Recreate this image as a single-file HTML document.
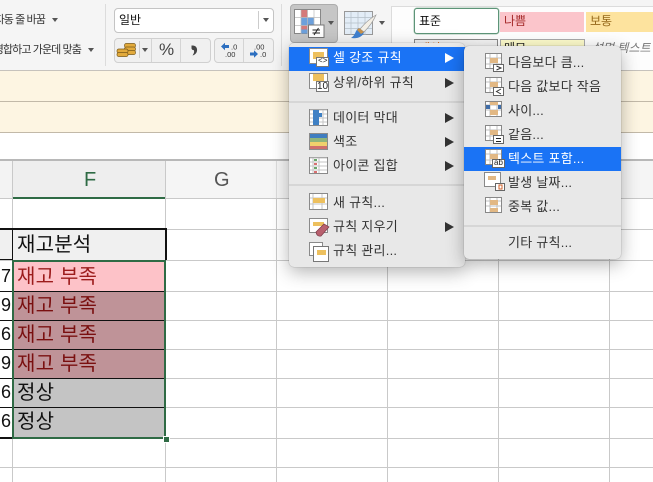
<!DOCTYPE html>
<html lang="ko"><head><meta charset="utf-8"><style>
html,body{margin:0;padding:0}
#p{position:relative;width:653px;height:482px;overflow:hidden;background:#fff;font-family:"Liberation Sans","Noto Sans CJK KR",sans-serif;color:#222}
#p div,#p svg{position:absolute}
.t{white-space:nowrap;line-height:16px}
.m{font-size:13px;color:#333;letter-spacing:.25px;height:16px}
.c{font-size:20px;line-height:26px;white-space:nowrap;left:17px;letter-spacing:.2px}
.a{width:0;height:0;border-left:9px solid #333;border-top:5px solid transparent;border-bottom:5px solid transparent;left:445px}
.d{width:0;height:0;border-top:4px solid #555;border-left:3px solid transparent;border-right:3px solid transparent}
.n{left:0;width:11px;text-align:right;font-size:18px;line-height:24px;color:#111}
</style></head><body><div id="p">

<div style="left:0;top:0;width:653px;height:70px;background:#f5f5f5"></div>
<div style="left:0;top:70px;width:653px;height:1px;background:#c6c2bc"></div>
<div style="left:0;top:71px;width:653px;height:30px;background:#fdf5e2"></div>
<div style="left:0;top:101px;width:653px;height:1px;background:#c2b9a8"></div>
<div style="left:0;top:102px;width:653px;height:30px;background:#fdf5e2"></div>
<div style="left:0;top:132px;width:653px;height:1px;background:#c2b9a8"></div>
<div style="left:0;top:159px;width:653px;height:2px;background:#b8b8b8"></div>

<div style="left:0;top:161px;width:12px;height:37px;background:#f3f3f3"></div>
<div style="left:13px;top:161px;width:152px;height:36px;background:#eeeeee"></div>
<div style="left:166px;top:161px;width:487px;height:37px;background:#f5f5f5"></div>
<div style="left:0;top:198px;width:653px;height:1px;background:#c9c9c9"></div>
<div style="left:13px;top:197px;width:153px;height:2px;background:#2f6b45"></div>
<div class="t" style="left:84px;top:170px;font-size:20px;line-height:20px;color:#2f6b45">F</div>
<div class="t" style="left:214px;top:170px;font-size:20px;line-height:20px;color:#555">G</div>

<svg style="left:0;top:0" width="653" height="482">
<g stroke="#c9c9c9" stroke-width="1" shape-rendering="crispEdges">
<path d="M12.5 161V482M165.5 161V482M276.5 199V482M387.5 199V482M498.5 199V482M609.5 199V482"/>
<path d="M0 229.5H653M0 260.5H653M0 291.5H653M0 320.5H653M0 349.5H653M0 378.5H653M0 407.5H653M0 438.5H653M0 467.5H653"/>
</g>
<path d="M276.5 161V198M387.5 161V198M498.5 161V198M609.5 161V198" stroke="#dcdcdc" shape-rendering="crispEdges"/>
</svg>

<div style="left:0;top:230px;width:12px;height:29px;background:#f0f0f0"></div>
<div style="left:13px;top:230px;width:152px;height:30px;background:#f0f0f0"></div>
<div style="left:0;top:228px;width:166px;height:2px;background:#111"></div>
<div style="left:12px;top:228px;width:1px;height:211px;background:#111"></div>
<div style="left:165px;top:228px;width:2px;height:32px;background:#111"></div>
<div style="left:0;top:259px;width:13px;height:1px;background:#111"></div>
<div style="left:0;top:291px;width:13px;height:1px;background:#111"></div>
<div style="left:0;top:320px;width:13px;height:1px;background:#111"></div>
<div style="left:0;top:349px;width:13px;height:1px;background:#111"></div>
<div style="left:0;top:378px;width:13px;height:1px;background:#111"></div>
<div style="left:0;top:407px;width:13px;height:1px;background:#111"></div>
<div style="left:0;top:437px;width:13px;height:2px;background:#111"></div>

<div style="left:14px;top:262px;width:150px;height:29px;background:#fdc2c8"></div>
<div style="left:14px;top:292px;width:150px;height:28px;background:#bf9398"></div>
<div style="left:14px;top:321px;width:150px;height:28px;background:#bf9398"></div>
<div style="left:14px;top:350px;width:150px;height:28px;background:#bf9398"></div>
<div style="left:14px;top:379px;width:150px;height:28px;background:#c4c4c4"></div>
<div style="left:14px;top:408px;width:150px;height:29px;background:#c4c4c4"></div>
<div style="left:14px;top:291px;width:150px;height:1px;background:#111"></div>
<div style="left:14px;top:320px;width:150px;height:1px;background:#111"></div>
<div style="left:14px;top:349px;width:150px;height:1px;background:#111"></div>
<div style="left:14px;top:378px;width:150px;height:1px;background:#111"></div>
<div style="left:14px;top:407px;width:150px;height:1px;background:#111"></div>
<div style="left:12px;top:260px;width:150px;height:175px;border:2px solid #2f6b45"></div>
<div style="left:163px;top:436px;width:5px;height:5px;background:#2f6b45;border:1px solid #fff"></div>

<div class="c" style="top:232px;color:#111">재고분석</div>
<div class="c" style="top:264px;color:#9c1c1c">재고 부족</div>
<div class="c" style="top:293px;color:#7a1010">재고 부족</div>
<div class="c" style="top:322px;color:#7a1010">재고 부족</div>
<div class="c" style="top:351px;color:#7a1010">재고 부족</div>
<div class="c" style="top:380px;color:#111">정상</div>
<div class="c" style="top:409px;color:#111">정상</div>
<div class="n" style="top:264px">7</div>
<div class="n" style="top:293px">9</div>
<div class="n" style="top:322px">6</div>
<div class="n" style="top:351px">9</div>
<div class="n" style="top:380px">6</div>
<div class="n" style="top:409px">6</div>

<div class="t" style="right:608px;top:12px;font-size:11px;letter-spacing:-.9px;color:#333">자동 줄 바꿈</div>
<div class="d" style="left:52px;top:18px"></div>
<div class="t" style="right:572px;top:42px;font-size:11px;letter-spacing:-.9px;color:#333">병합하고 가운데 맞춤</div>
<div class="d" style="left:88px;top:48px"></div>
<div style="left:105px;top:4px;width:1px;height:62px;background:#dcdcdc"></div>
<div style="left:281px;top:4px;width:1px;height:62px;background:#dcdcdc"></div>

<div style="left:114px;top:8px;width:158px;height:23px;background:#fff;border:1px solid #c4c4c4;border-radius:4px"></div>
<div style="left:258px;top:11px;width:1px;height:18px;background:#ccc"></div>
<div class="d" style="left:263px;top:18px"></div>
<div class="t" style="left:119px;top:12px;font-size:12px;color:#111">일반</div>

<div style="left:114px;top:38px;width:95px;height:23px;background:#f0f0f0;border:1px solid #d0d0d0;border-radius:4px"></div>
<div style="left:151px;top:39px;width:1px;height:23px;background:#d4d4d4"></div>
<div style="left:180px;top:39px;width:1px;height:23px;background:#d4d4d4"></div>
<div style="left:139px;top:41px;width:1px;height:17px;background:#ccc"></div>
<div class="d" style="left:142px;top:48px"></div>
<div style="left:214px;top:38px;width:58px;height:23px;background:#f0f0f0;border:1px solid #d0d0d0;border-radius:4px"></div>
<div style="left:243px;top:39px;width:1px;height:23px;background:#d4d4d4"></div>
<svg style="left:116px;top:42px" width="22" height="18">
<g stroke="#7a5a1a" stroke-width=".7" fill="#e2aa3c"><rect x="8.500" y="1.500" width="11" height="4" rx="1.800"/><rect x="8.500" y="5" width="11" height="4" rx="1.800"/><rect x="8.500" y="8.500" width="11" height="4" rx="1.800"/><rect x="1" y="7" width="11" height="4" rx="1.800"/><rect x="1" y="10.500" width="11" height="4" rx="1.800"/></g></svg>
<div class="t" style="left:159px;top:42px;font-size:17px;color:#444">%</div>
<svg style="left:190px;top:44px" width="10" height="13"><path d="M1.500 1.500C6 1 7.500 4 7 7C6.500 9.500 4.500 11 2.500 11.500C4 9.500 4.500 7.500 3.800 6C3 6.300 2 5.800 1.500 4.500Z" fill="#444"/></svg>
<svg style="left:220px;top:42px" width="20" height="16"><path d="M1 4.500L5 .8V3H9V6H5V8.200Z" fill="#2c6fc0"/><text x="11" y="7.500" font-size="7.500" fill="#333" font-family="Liberation Sans">.0</text><text x="5" y="15" font-size="7.500" fill="#333" font-family="Liberation Sans">.00</text></svg>
<svg style="left:249px;top:42px" width="20" height="16"><text x="5" y="7.500" font-size="7.500" fill="#333" font-family="Liberation Sans">.00</text><path d="M9 12L5 8.300V10.500H1V13.500H5V15.700Z" fill="#2c6fc0"/><text x="11" y="15" font-size="7.500" fill="#333" font-family="Liberation Sans">.0</text></svg>

<div style="left:290px;top:4px;width:46px;height:37px;background:#c6c6c6;border:1px solid #adadad;border-radius:4px"></div>
<svg style="left:294px;top:9px" width="32" height="30">
<rect x=".5" y=".5" width="26" height="24" fill="#fff" stroke="#888"/>
<rect x="7" y="1" width="6.500" height="7.500" fill="#d47a7a"/><rect x="7" y="8.500" width="13" height="8" fill="#6ca0dc"/><rect x="7" y="16.500" width="6.500" height="4" fill="#d47a7a"/><rect x="7" y="20.500" width="13" height="4" fill="#6ca0dc"/>
<path d="M7 1V25M13.500 1V25M20 1V25M1 8.500H26M1 16.500H26" stroke="#bbb" stroke-width=".7"/>
<rect x="14.500" y="16" width="15.500" height="12.500" fill="#fff" stroke="#777"/>
<path d="M18.500 21H26M18.500 24H26M24.500 19L20 26" stroke="#222" fill="none"/>
</svg>
<div class="d" style="left:328px;top:21px"></div>
<svg style="left:344px;top:11px" width="36" height="29">
<rect x=".5" y=".5" width="28" height="23" fill="#e3edf7" stroke="#999"/>
<path d="M7 1V24M14 1V24M21 1V24M1 6.500H28M1 12H28M1 17.500H28" stroke="#b4bec8" stroke-width=".7"/>
<path d="M32 4C27 7 21 12 16 18L20 21C24 17 29 11 32 4Z" fill="#f3efe6" stroke="#999" stroke-width=".7"/>
<path d="M15 17C11 19 12 24 7 27C13 28 19 26 20 21Z" fill="#3f80d0"/><path d="M15 17L20 21L17 23L13 19Z" fill="#c9924a"/>
</svg>
<div class="d" style="left:379px;top:21px"></div>

<div style="left:391px;top:6px;width:262px;height:64px;background:#fdfdfd;border-left:1px solid #dcdcdc;border-top:1px solid #dcdcdc;box-sizing:border-box"></div>
<div class="t" style="left:414px;top:8px;width:83px;height:24px;background:#fff;border:1px solid #5d9478;border-radius:3px;box-shadow:0 0 0 .5px #a8c8b4"></div>
<div class="t" style="left:419px;top:13px;font-size:12px;color:#111">표준</div>
<div style="left:500px;top:12px;width:84px;height:20px;background:#fbc5cb"></div>
<div class="t" style="left:504px;top:13px;font-size:12px;color:#a52a2a">나쁨</div>
<div style="left:586px;top:12px;width:67px;height:20px;background:#fde39e"></div>
<div class="t" style="left:590px;top:13px;font-size:12px;color:#96691a">보통</div>
<div style="left:414px;top:39px;width:82px;height:20px;background:#f2f2f2;border:1px solid #888"></div>
<div class="t" style="left:419px;top:40px;font-size:12px;color:#e07020">계산</div>
<div style="left:500px;top:39px;width:83px;height:20px;background:#fdfbcb;border:1px solid #aaa"></div>
<div class="t" style="left:504px;top:40px;font-size:12px;color:#222">메모</div>
<div class="t" style="left:592px;top:40px;font-size:12px;font-style:italic;color:#777">설명 텍스트</div>

<div style="left:289px;top:43px;width:176px;height:224px;background:#e8e8e8;border-radius:5px;box-shadow:0 5px 18px rgba(0,0,0,.3),0 0 1px rgba(0,0,0,.4)"></div>
<div style="left:289px;top:47px;width:176px;height:24px;background:#1a73f5"></div>
<div style="left:289px;top:101px;width:176px;height:2px;background:#d6d6d6"></div>
<div style="left:289px;top:184px;width:176px;height:2px;background:#d6d6d6"></div>
<div class="t m" style="left:333px;top:50px;color:#fff">셀 강조 규칙</div>
<div class="t m" style="left:333px;top:75px">상위/하위 규칙</div>
<div class="t m" style="left:333px;top:110px">데이터 막대</div>
<div class="t m" style="left:333px;top:134px">색조</div>
<div class="t m" style="left:333px;top:158px">아이콘 집합</div>
<div class="t m" style="left:333px;top:195px">새 규칙...</div>
<div class="t m" style="left:333px;top:219px">규칙 지우기</div>
<div class="t m" style="left:333px;top:243px">규칙 관리...</div>
<div class="a" style="top:53px;border-left-color:#fff"></div>
<div class="a" style="top:78px"></div>
<div class="a" style="top:113px"></div>
<div class="a" style="top:137px"></div>
<div class="a" style="top:161px"></div>
<div class="a" style="top:222px"></div>

<svg style="left:0;top:0" width="653" height="482" shape-rendering="crispEdges">
<g fill="#fff" stroke="#8a8a8a">
<rect x="309.500" y="48.500" width="18" height="15"/>
<rect x="309.500" y="73.500" width="18" height="15"/>
<rect x="309.500" y="109.500" width="18" height="16"/>
<rect x="309.500" y="133.500" width="18" height="16"/>
<rect x="309.500" y="157.500" width="18" height="16"/>
<rect x="309.500" y="193.500" width="18" height="16"/>
<rect x="309.500" y="218.500" width="18" height="14"/>
<rect x="309.500" y="242.500" width="13" height="13"/>
</g>
<path d="M310 110H327M310 114H327M310 118H327M310 122H327M323 110V125M310 158H327M310 162H327M310 166H327M310 170H327M313 158V173M319 158V173M313 194V209M322 194V209M310 198H327M310 204H327" stroke="#c4c4c4" fill="none"/>
<rect x="313" y="110" width="6" height="15" fill="#3f80c4"/><rect x="319" y="113" width="3" height="4" fill="#3f80c4"/>
<rect x="310" y="134" width="17" height="4" fill="#3f7dc0"/><rect x="310" y="138" width="17" height="4" fill="#8fb47a"/><rect x="310" y="142" width="17" height="4" fill="#f0d06c"/><rect x="310" y="146" width="17" height="3" fill="#cf6f6c"/>
<path d="M314 159h3v2h-3zM314 167h3v2h-3z" fill="#6aa66a"/><path d="M314 163h3v2h-3zM314 171h3v2h-3z" fill="#d87070"/>
<g fill="#edc05e"><rect x="313" y="52" width="11" height="7"/><rect x="313" y="74" width="11" height="7"/><rect x="313" y="198" width="12" height="5"/><rect x="313" y="222" width="11" height="4"/></g>
<g fill="#fff" stroke="#777"><rect x="316.500" y="57.500" width="12" height="9"/><rect x="316.500" y="81.500" width="12" height="10"/><rect x="313.500" y="246.500" width="15" height="15"/></g>
<rect x="317" y="250" width="9" height="5" fill="#edc05e"/>
</svg>
<div style="left:464px;top:46px;width:157px;height:213px;background:#e8e8e8;border-radius:5px;box-shadow:0 5px 18px rgba(0,0,0,.3),0 0 1px rgba(0,0,0,.4)"></div>
<div style="left:464px;top:147px;width:157px;height:24px;background:#1a73f5"></div>
<div style="left:464px;top:225px;width:157px;height:2px;background:#d6d6d6"></div>
<div class="t m" style="left:508px;top:55px">다음보다 큼...</div>
<div class="t m" style="left:508px;top:79px">다음 값보다 작음</div>
<div class="t m" style="left:508px;top:103px">사이...</div>
<div class="t m" style="left:508px;top:127px">같음...</div>
<div class="t m" style="left:508px;top:151px;color:#fff">텍스트 포함...</div>
<div class="t m" style="left:508px;top:175px">발생 날짜...</div>
<div class="t m" style="left:508px;top:199px">중복 값...</div>
<div class="t m" style="left:508px;top:235px">기타 규칙...</div>

<svg style="left:0;top:0" width="653" height="482" shape-rendering="crispEdges">
<g fill="#fff" stroke="#888">
<rect x="485.500" y="53.500" width="16" height="15"/>
<rect x="485.500" y="77.500" width="16" height="15"/>
<rect x="485.500" y="101.500" width="16" height="15"/>
<rect x="485.500" y="125.500" width="16" height="15"/>
<rect x="485.500" y="149.500" width="16" height="15"/>
<rect x="484.500" y="172.500" width="16" height="14"/>
<rect x="485.500" y="197.500" width="16" height="15"/>
</g>
<path d="M490 54V68M497 54V68M486 58H501M486 64H501M490 78V92M497 78V92M486 82H501M486 88H501M490 102V116M497 102V116M486 105H501M486 110H501M490 126V140M497 126V140M486 130H501M486 136H501M490 150V164M497 150V164M486 154H501M486 160H501M490 198V212M497 198V212M486 201H501M486 206H501" stroke="#c0c0c0" fill="none"/>
<g fill="#e2b884"><rect x="490" y="58" width="8" height="5"/><rect x="490" y="82" width="8" height="5"/><rect x="490" y="102" width="8" height="3"/><rect x="490" y="110" width="8" height="5"/><rect x="490" y="130" width="8" height="5"/><rect x="490" y="154" width="8" height="5"/><rect x="488" y="176" width="8" height="4"/><rect x="490" y="200" width="8" height="5"/><rect x="490" y="208" width="8" height="4"/></g>
<rect x="486" y="105" width="4" height="4" fill="#3f6da8"/><rect x="498" y="105" width="3" height="4" fill="#3f6da8"/>
<g fill="#fff" stroke="#666">
<rect x="493.500" y="64.500" width="10" height="7"/>
<rect x="493.500" y="87.500" width="10" height="8"/>
<rect x="493.500" y="135.500" width="10" height="8"/>
<rect x="492.500" y="159.500" width="12" height="8"/>
<rect x="495.500" y="183.500" width="9" height="7"/>
</g>
<rect x="499" y="185" width="3" height="4" fill="#fff" stroke="#d2602a"/>
<path d="M496 138.500H501M496 141.500H501" stroke="#222"/>
<path d="M496.500 66L501 68L496.500 70M501 89L496.500 91.500L501 94" fill="none" stroke="#333" shape-rendering="auto"/>
</svg>
<div class="t" style="left:494px;top:158px;font-size:8px;line-height:10px;color:#222">ab</div>
<div class="t" style="left:318px;top:57px;font-size:8px;line-height:10px;color:#222;font-family:'Liberation Mono'">&lt;&gt;</div>
<div class="t" style="left:317px;top:82px;font-size:10px;line-height:10px;color:#222">10</div>
<svg style="left:315px;top:222px" width="16" height="16"><path d="M1 10L9 2L14 5L6 14Q2 15 1 10Z" fill="#b8606e" stroke="#7d3a48" stroke-width=".7"/></svg>

</div></body></html>
